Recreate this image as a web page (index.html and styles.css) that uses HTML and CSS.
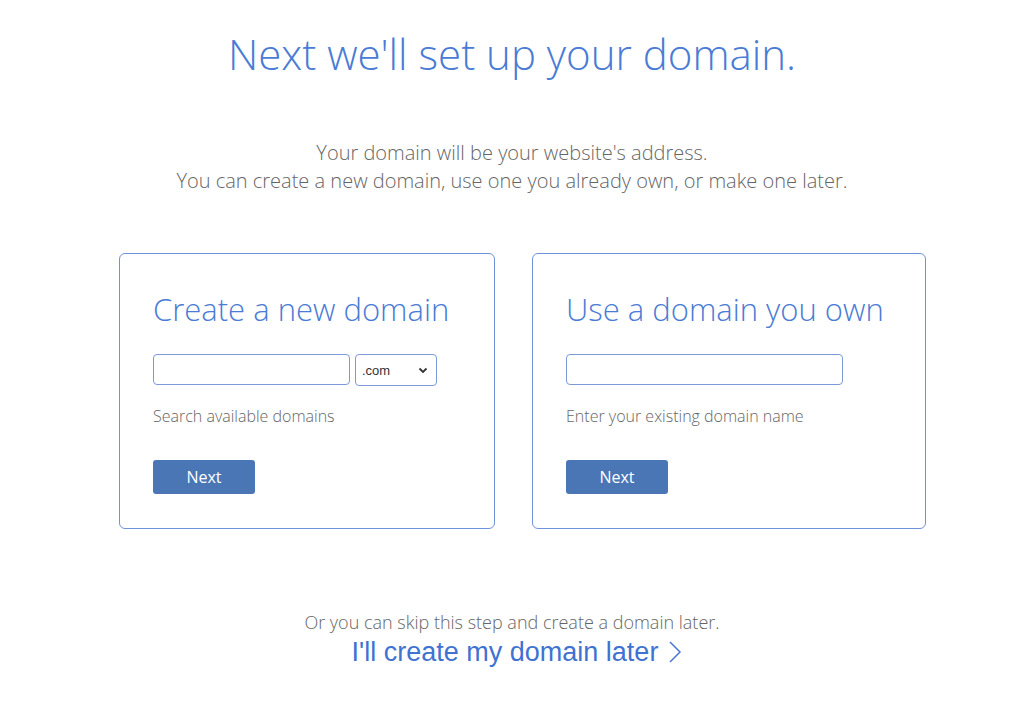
FILE: index.html
```html
<!DOCTYPE html>
<html lang="en">
<head>
	<meta charset="UTF-8">
	<title>Set up your domain</title>
	<link rel="stylesheet" href="styles.css">
</head>
<body>
	<h1 class="title">Next we'll set up your domain.</h1>
	<p class="intro">Your domain will be your website's address.<br>You can create a new domain, use one you already own, or make one later.</p>

	<div class="cards">
		<div class="card card-new">
			<h2>Create a new domain</h2>
			<div class="row">
				<input type="text" class="field field-new">
				<div class="tld">
					<span>.com</span>
					<svg width="10" height="7" viewBox="0 0 10 7"><path d="M1.5 1.5 L5 5 L8.5 1.5" fill="none" stroke="#333" stroke-width="1.8"/></svg>
				</div>
			</div>
			<p class="hint">Search available domains</p>
			<button class="btn">Next</button>
		</div>
		<div class="card card-own">
			<h2>Use a domain you own</h2>
			<div class="row">
				<input type="text" class="field field-own">
			</div>
			<p class="hint">Enter your existing domain name</p>
			<button class="btn">Next</button>
		</div>
	</div>

	<p class="skip">Or you can skip this step and create a domain later.</p>
	<a class="later" href="#">I'll create my domain later <svg width="14" height="24" viewBox="0 0 14 24"><path d="M2 2 L12 12 L2 22" fill="none" stroke="#4a78d2" stroke-width="1.5"/></svg></a>
</body>
</html>
```

FILE: styles.css
```css
body{margin:0;background:#fff;font-family:"Open Sans",sans-serif;font-weight:300;color:#666;text-align:center;}

.title{margin:0;padding-top:26px;font-size:42px;font-weight:300;line-height:56px;color:#4a7bd5;}
.intro{margin:57px 0 0;font-size:20px;line-height:28px;color:#666;}

.cards{display:flex;gap:37px;margin:58px 0 0 119px;text-align:left;}
.card{box-sizing:border-box;height:276px;padding:33px 33px 0;border:1px solid #6f92d8;border-radius:6px;}
.card-new{width:376px;}
.card-own{width:394px;}
.card h2{margin:0;font-size:31px;font-weight:300;line-height:44px;white-space:nowrap;color:#4a7bd5;}

.row{display:flex;gap:5px;margin-top:23px;height:31px;}
.field{box-sizing:border-box;height:31px;margin:0;border:1px solid #7d9ad8;border-radius:4px;background:#fff;outline:none;}
.field-new{width:197px;}
.field-own{width:277px;}
.tld{box-sizing:border-box;display:flex;align-items:center;justify-content:space-between;width:82px;height:32px;padding:0 8px 0 6px;border:1px solid #7d9ad8;border-radius:4px;font-family:"Liberation Sans",Arial,sans-serif;font-weight:400;font-size:13px;color:#333;}

.hint{margin:20px 0 0;font-size:16px;line-height:22px;color:#666;}

.btn{display:block;width:102px;height:34px;margin-top:33px;padding:0;border:0;border-radius:3px;background:#4a76b5;color:#fff;font-family:"Open Sans",sans-serif;font-weight:400;font-size:16px;}

.skip{margin:81px 0 0;font-size:18px;line-height:24px;color:#666;}
.later{display:inline-flex;align-items:center;gap:10px;margin-top:2px;padding-left:10px;font-family:"Liberation Sans",Arial,sans-serif;font-weight:400;font-size:27px;line-height:32px;color:#3f72d1;text-decoration:none;}
```
